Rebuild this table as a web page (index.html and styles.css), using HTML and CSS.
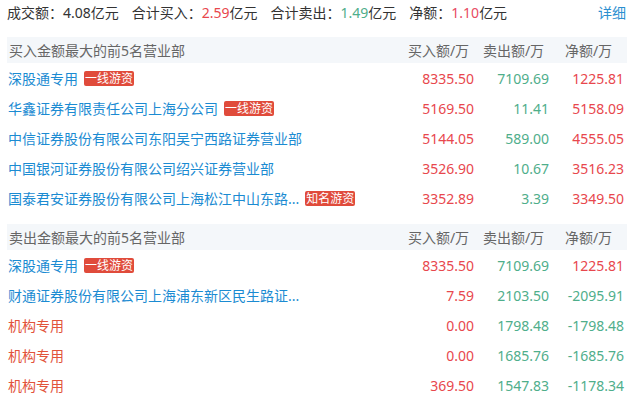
FILE: index.html
```html
<!DOCTYPE html>
<html lang="zh-CN">
<head>
<meta charset="utf-8">
<link rel="stylesheet" href="styles.css">
</head>
<body>
<div class="wrap">
  <div class="summary">
    <div class="items">
      <span class="item">成交额：4.08亿元</span>
      <span class="item">合计买入：<span class="red">2.59</span>亿元</span>
      <span class="item">合计卖出：<span class="green">1.49</span>亿元</span>
      <span class="item">净额：<span class="pink">1.10</span>亿元</span>
    </div>
    <a class="detail">详细</a>
  </div>

  <div class="section">
    <div class="row head">
      <div class="name">买入金额最大的前5名营业部</div>
      <div class="col">买入额/万</div>
      <div class="col">卖出额/万</div>
      <div class="col">净额/万</div>
    </div>
    <div class="row">
      <div class="name"><span class="link">深股通专用</span><span class="tag">一线游资</span></div>
      <div class="num red">8335.50</div><div class="num green">7109.69</div><div class="num red">1225.81</div>
    </div>
    <div class="row">
      <div class="name"><span class="link">华鑫证券有限责任公司上海分公司</span><span class="tag">一线游资</span></div>
      <div class="num red">5169.50</div><div class="num green">11.41</div><div class="num red">5158.09</div>
    </div>
    <div class="row">
      <div class="name"><span class="link">中信证券股份有限公司东阳吴宁西路证券营业部</span></div>
      <div class="num red">5144.05</div><div class="num green">589.00</div><div class="num red">4555.05</div>
    </div>
    <div class="row">
      <div class="name"><span class="link">中国银河证券股份有限公司绍兴证券营业部</span></div>
      <div class="num red">3526.90</div><div class="num green">10.67</div><div class="num red">3516.23</div>
    </div>
    <div class="row">
      <div class="name"><span class="link">国泰君安证券股份有限公司上海松江中山东路...</span><span class="tag">知名游资</span></div>
      <div class="num red">3352.89</div><div class="num green">3.39</div><div class="num red">3349.50</div>
    </div>
  </div>

  <div class="section">
    <div class="row head">
      <div class="name">卖出金额最大的前5名营业部</div>
      <div class="col">买入额/万</div>
      <div class="col">卖出额/万</div>
      <div class="col">净额/万</div>
    </div>
    <div class="row">
      <div class="name"><span class="link">深股通专用</span><span class="tag">一线游资</span></div>
      <div class="num red">8335.50</div><div class="num green">7109.69</div><div class="num red">1225.81</div>
    </div>
    <div class="row">
      <div class="name"><span class="link">财通证券股份有限公司上海浦东新区民生路证...</span></div>
      <div class="num red">7.59</div><div class="num green">2103.50</div><div class="num green">-2095.91</div>
    </div>
    <div class="row">
      <div class="name"><span class="org">机构专用</span></div>
      <div class="num red">0.00</div><div class="num green">1798.48</div><div class="num green">-1798.48</div>
    </div>
    <div class="row">
      <div class="name"><span class="org">机构专用</span></div>
      <div class="num red">0.00</div><div class="num green">1685.76</div><div class="num green">-1685.76</div>
    </div>
    <div class="row">
      <div class="name"><span class="org">机构专用</span></div>
      <div class="num red">369.50</div><div class="num green">1547.83</div><div class="num green">-1178.34</div>
    </div>
  </div>
</div>
</body>
</html>
```

FILE: styles.css
```css
html, body {
  margin: 0;
  padding: 0;
  background: #fff;
}
body {
  font-family: "Noto Sans", "Noto Sans CJK SC", sans-serif;
  font-size: 14px;
  color: #333;
}
.wrap {
  padding: 0 10px 0 7px;
}
.summary {
  display: flex;
  justify-content: space-between;
  align-items: center;
  height: 26px;
  line-height: 26px;
  margin-bottom: 11px;
}
.items {
  display: flex;
  gap: 13px;
  white-space: nowrap;
}
.detail {
  color: #2b8fd0;
  padding-right: 1px;
}
.section {
  margin-bottom: 11px;
}
.row {
  display: grid;
  grid-template-columns: 1fr 75px 75px 75px;
  padding-right: 3px;
  height: 30px;
  align-items: center;
  white-space: nowrap;
}
.row.head {
  height: 26px;
  background: #f4f7fa;
  color: #666;
}
.name {
  padding-left: 1px;
  display: flex;
  align-items: center;
  overflow: hidden;
}
.head .name {
  padding-left: 2px;
}
.col {
  text-align: center;
  padding-left: 4px;
}
.num {
  text-align: right;
}
.link {
  color: #1b8bd2;
}
.org {
  color: #e2533a;
}
.tag {
  display: inline-block;
  margin-left: 6px;
  background: #e04b3b;
  color: #fff;
  font-size: 12px;
  line-height: 15px;
  height: 15px;
  padding: 0 1px;
  border-radius: 2px;
}
.red { color: #e8474d; }
.pink { color: #e84a62; }
.green { color: #4fae8b; }
```
